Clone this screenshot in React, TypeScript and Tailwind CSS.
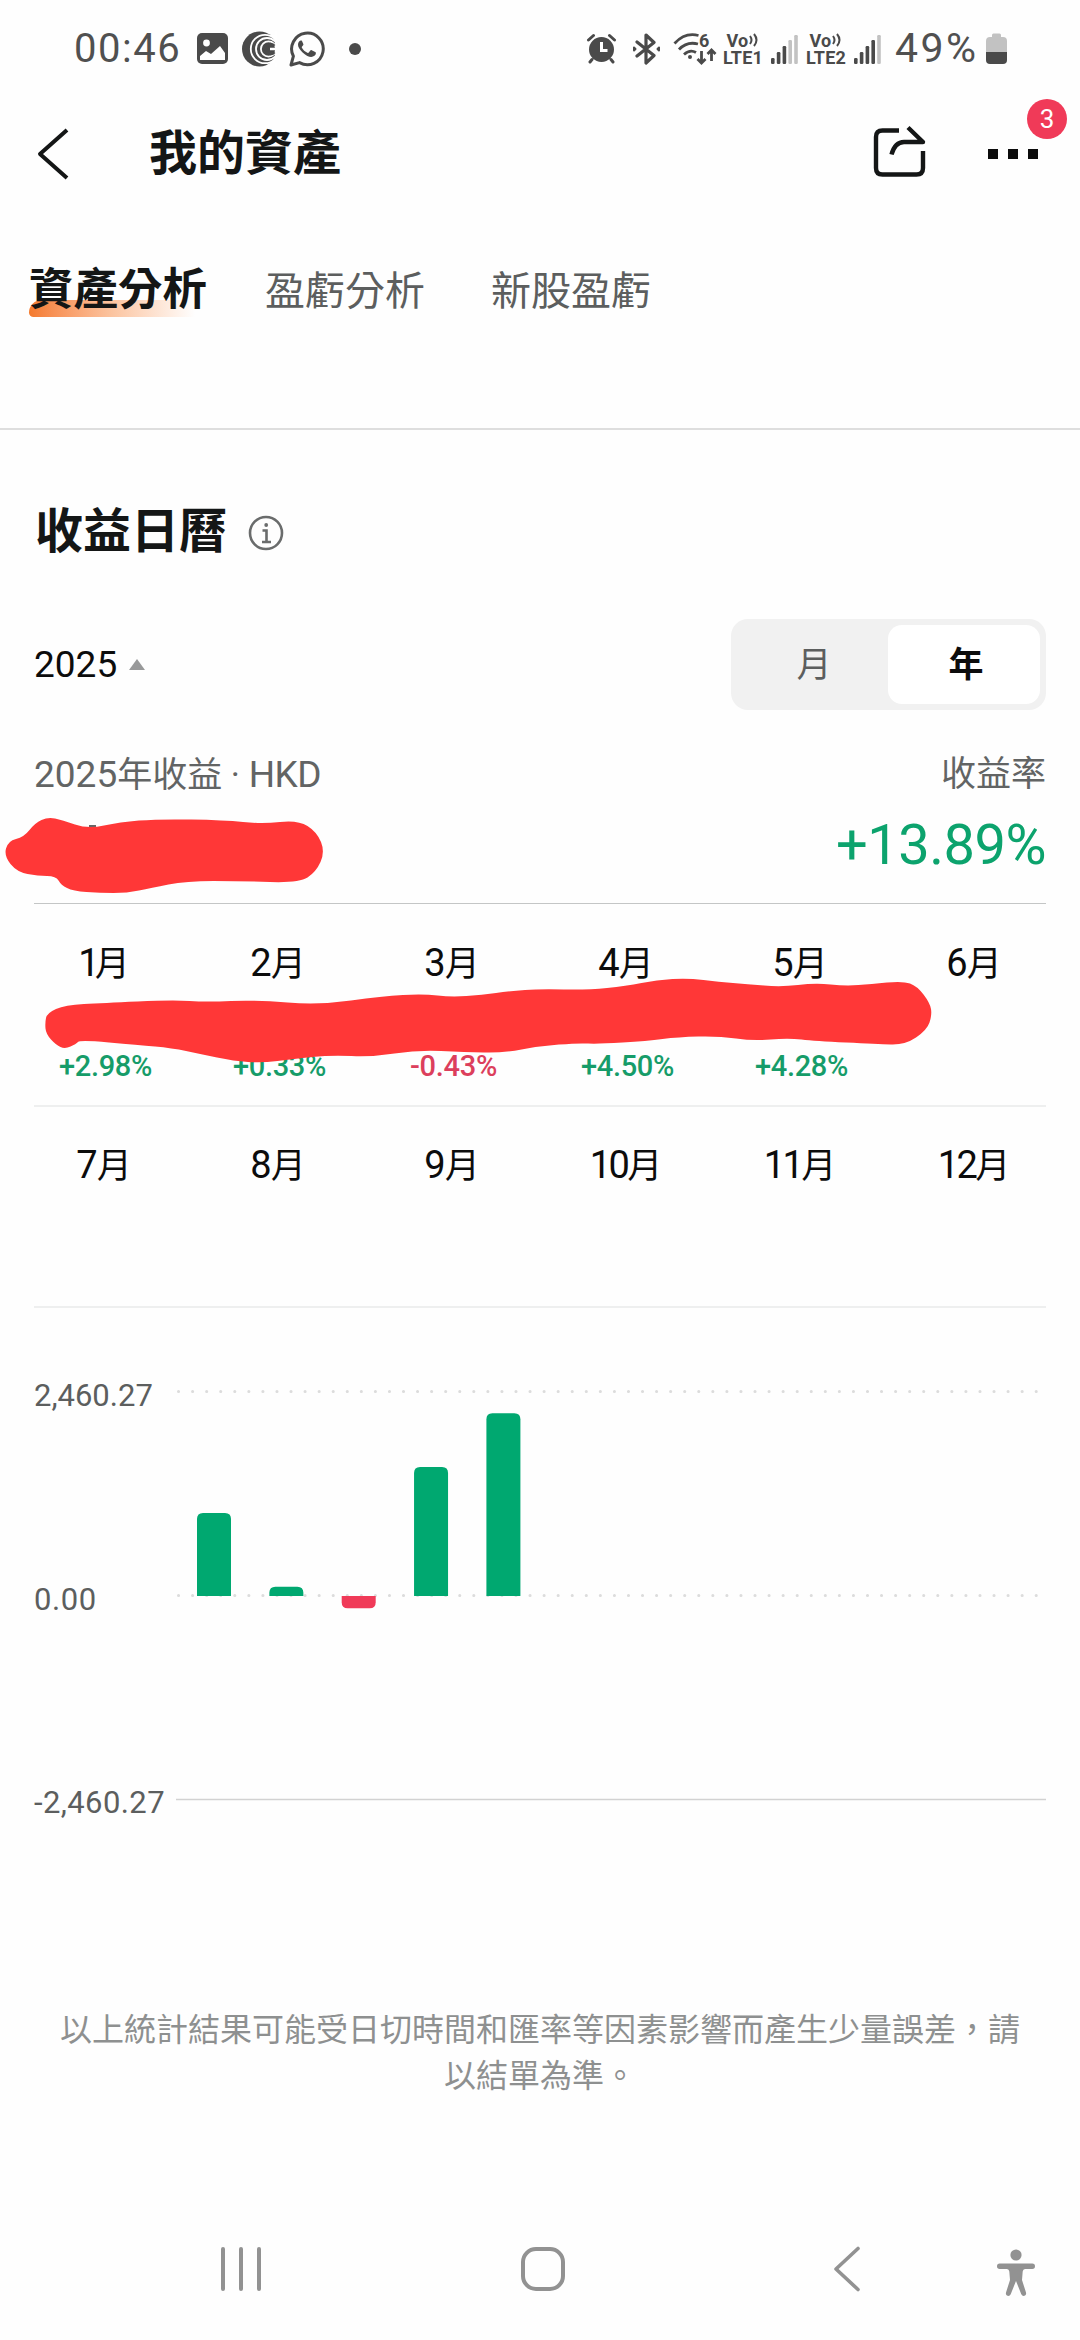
import React, { useState } from 'react';

interface MonthItem {
    month: number;
    rate?: string;
    value?: number;
}

type Point = [number, number];

const MONTHS: MonthItem[] = [
    { month: 1, rate: '+2.98%', value: 1001 },
    { month: 2, rate: '+0.33%', value: 112 },
    { month: 3, rate: '-0.43%', value: -148 },
    { month: 4, rate: '+4.50%', value: 1556 },
    { month: 5, rate: '+4.28%', value: 2203 },
    { month: 6 },
    { month: 7 },
    { month: 8 },
    { month: 9 },
    { month: 10 },
    { month: 11 },
    { month: 12 },
];

const TABS = ['資產分析', '盈虧分析', '新股盈虧'];

const MAX_VALUE = 2460.27;

// Hand-drawn marker outlines that hide the amounts
const TOTAL_MARK: Point[] = [
    [24, 837], [35, 823], [48, 817], [62, 820], [88, 829], [120, 822], [158, 819], [224, 820], [262, 824],
    [298, 820], [317, 832], [325, 852], [316, 872], [299, 883], [241, 881], [186, 881], [151, 888], [127, 893],
    [100, 893], [73, 891], [61, 885], [56, 876], [38, 876], [17, 872], [4, 856], [8, 841],
];

const MONTH_MARK: Point[] = [
    [45, 1023], [47, 1013], [65, 1005], [103, 1003], [172, 1000], [207, 1002], [255, 1000], [320, 1005],
    [382, 996], [424, 994], [451, 997], [482, 995], [510, 991], [540, 989], [588, 990], [626, 986], [657, 980],
    [688, 978], [719, 982], [747, 984], [781, 987], [815, 983], [846, 986], [871, 984], [903, 981], [917, 986],
    [930, 1003], [932, 1015], [927, 1030], [905, 1045], [877, 1044], [815, 1041], [788, 1038], [753, 1041],
    [719, 1036], [678, 1037], [647, 1041], [598, 1044], [578, 1043], [540, 1046], [503, 1053], [465, 1052],
    [417, 1050], [372, 1057], [331, 1055], [293, 1059], [262, 1063], [234, 1061], [200, 1054], [172, 1048],
    [138, 1045], [80, 1040], [76, 1044], [65, 1049], [56, 1045], [46, 1034],
];

const toSmoothPath = (points: Point[]) => {
    const mid = (a: Point, b: Point) => `${(a[0] + b[0]) / 2} ${(a[1] + b[1]) / 2}`;
    const last = points[points.length - 1];
    const curves = points.map((p, i) => `Q${p[0]} ${p[1]} ${mid(p, points[(i + 1) % points.length])}`);
    return `M${mid(last, points[0])}${curves.join('')}Z`;
};

// The digit "1" carries wide side bearings, so it is pulled in towards 月
const monthSpacing = (month: number) => {
    if (month === 1) return 'tracking-[-5px]';
    return month < 10 ? 'tracking-[-1px]' : 'tracking-[-2.5px]';
};

const SignalBars: React.FC<{ level: number }> = ({ level }) => (
    <svg width="28" height="32" viewBox="0 0 28 32">
        {[6, 12, 18, 24, 29].map((h, i) => (
            <rect key={h} x={i * 5.8} y={31 - h} width="3.6" height={h} rx="1.2" fill={i < level ? '#4a4a4a' : '#c2c2c2'} />
        ))}
    </svg>
);

const VoLte: React.FC<{ sim: number }> = ({ sim }) => (
    <div className="flex w-[40px] flex-col items-center text-[18px] font-bold leading-[17px] tracking-[0.2px]">
        <span className="flex items-center">
            Vo
            <svg width="11" height="16" viewBox="0 0 11 16" fill="none" stroke="#4a4a4a" strokeWidth="2">
                <path d="M2 4q3 4 0 8M6 2q5 6 0 12" />
            </svg>
        </span>
        <span>LTE{sim}</span>
    </div>
);

const StatusBar: React.FC = () => (
    <div className="flex h-[97px] items-center pl-[74px] pr-[73px] text-[#4a4a4a]">
        <span className="w-[108px] text-[40px] font-normal tracking-[1.5px] text-[#505050]">00:46</span>
        <svg className="ml-[15px]" width="31" height="31" viewBox="0 0 31 31">
            <rect width="31" height="31" rx="5" fill="#4a4a4a" />
            <circle cx="9.5" cy="10" r="3.4" fill="#fff" />
            <path d="M3 27v-4l6-5 5 3 9-8 5 7v7z" fill="#fff" strokeLinejoin="round" />
        </svg>
        <svg className="ml-[14px]" width="35" height="36" viewBox="0 0 35 36" fill="none">
            <circle cx="17.5" cy="18" r="17.5" fill="#4a4a4a" />
            <g stroke="#fff" strokeWidth="1.8">
                <circle cx="23" cy="18" r="14.2" />
                <circle cx="25" cy="18" r="11" />
                <circle cx="26.5" cy="18" r="7.6" />
            </g>
            <path d="M33 0h2v36h-2zM30 4l5 0v8zM30 32l5 0v-8z" fill="#fff" />
            <path d="M32 15.2a4.5 4.5 0 1 0 0 5.6" stroke="#4a4a4a" strokeWidth="3.6" />
            <path d="M28 18h7" stroke="#fff" strokeWidth="2.5" />
        </svg>
        <svg className="ml-[12px]" width="36" height="36" viewBox="0 0 36 36">
            <path
                d="M2 34l2.4-8.8A15.8 15.8 0 1 1 10.5 31.6z"
                fill="none"
                stroke="#4a4a4a"
                strokeWidth="3"
                strokeLinejoin="round"
            />
            <path
                d="M12 9.500c-1.500 0-3 2-3 4.200 0 2 1.500 4.800 4.600 7.800 3.400 3.300 6.300 4.400 8.600 4.400 2.500 0 4.600-1.600 4.700-3.600.1-.8-.2-1-.7-1.300l-3.500-1.800c-.7-.3-1-.1-1.400.4l-1.500 1.900c-.4.500-.8.500-1.400.2-2.400-1.100-4.300-2.800-5.500-5-.3-.5-.2-.8.200-1.200l1-1.200c.4-.5.4-.8.2-1.400l-1.300-3c-.2-.4-.5-.4-1-.4z"
                fill="#4a4a4a"
            />
        </svg>
        <span className="ml-[24px] size-3 rounded-full bg-[#4a4a4a]" />

        <svg className="ml-auto" width="31" height="31" viewBox="0 0 31 31" fill="none" stroke="#4a4a4a" strokeWidth="3" strokeLinecap="round">
            <circle cx="15.5" cy="16.5" r="12.5" fill="#4a4a4a" stroke="none" />
            <path d="M2.5 7l5-4.5M28.5 7l-5-4.5M6 26.5l-2 2.5M25 26.5l2 2.5" />
            <path d="M15.5 9v8.5h6" stroke="#fff" strokeLinecap="butt" />
        </svg>
        <svg className="ml-[14px]" width="30" height="32" viewBox="0 0 30 32" fill="none" stroke="#4a4a4a" strokeWidth="3.2" strokeLinejoin="round" strokeLinecap="round">
            <path d="M6 9l17 13.5-8 7.5V2l8 7.5L6 23" />
            <path d="M3 14.5v3l1.500-1.500zM26.500 16l1.500-1.500v3z" strokeWidth="2" />
        </svg>
        <svg className="ml-[12px]" width="45" height="43" viewBox="0 -5 45 43" fill="none" stroke="#4a4a4a" strokeWidth="2.8">
            <path d="M1.500 11.500Q12 0 25.500 3.500M6 17.500q8-8.500 19-5.500M11 22.500q6-5.500 12-2" />
            <circle cx="17" cy="25" r="2" fill="#4a4a4a" stroke="none" />
            <path d="M28.500 19v12M24.500 27l4 4 4-4M38.500 29V18M34.500 22l4-4 4 4" />
            <text x="26" y="14.5" fontSize="18" fontWeight="700" fill="#4a4a4a" stroke="none">6</text>
        </svg>
        <div className="ml-[5px]"><VoLte sim={1} /></div>
        <div className="ml-[8px]"><SignalBars level={3} /></div>
        <div className="ml-[7px]"><VoLte sim={2} /></div>
        <div className="ml-[8px]"><SignalBars level={4} /></div>
        <span className="ml-[13px] w-[84px] text-[41px] font-normal tracking-[2.5px] text-[#505050]">49%</span>
        <svg className="ml-[7px]" width="21" height="32" viewBox="0 0 21 32">
            <path d="M6 4V2q0-1.500 1.500-1.500h6Q15 .5 15 2v2h2q4 0 4 4v11H0V8q0-4 4-4z" fill="#c2c2c2" />
            <path d="M0 19h21v8q0 4-4 4H4q-4 0-4-4z" fill="#4a4a4a" />
        </svg>
    </div>
);

const Header: React.FC = () => (
    <header className="flex h-[113px] items-center text-[#141616]">
        <svg className="ml-[36px]" width="34" height="54" viewBox="0 0 34 54" fill="none" stroke="#141616" strokeWidth="4">
            <path d="M31 3L4 27l27 24" strokeLinejoin="round" />
        </svg>
        <h1 className="ml-[79px] pt-px text-[48px] font-bold leading-none">我的資產</h1>
        <svg className="mb-[3px] ml-auto" width="54" height="58" viewBox="0 0 54 58" fill="none" stroke="#141616" strokeWidth="4.4">
            <path d="M27 7.500H10.500q-6.500 0-6.500 6.500v31q0 6.500 6.500 6.500h34q6.500 0 6.500-6.500V28" transform="translate(-1 0)" />
            <path d="M18.500 31.500Q22 19 31 19h19L35 4.500" strokeLinejoin="round" />
        </svg>
        <div className="relative ml-[61px] mr-[42px] flex gap-[10px]">
            <span className="size-[10px] bg-[#0c0c0c]" />
            <span className="size-[10px] bg-[#0c0c0c]" />
            <span className="size-[10px] bg-[#0c0c0c]" />
            <span className="absolute -top-[50px] left-[39px] flex size-10 items-center justify-center rounded-full bg-[#f03a58] text-[26px] leading-none text-white">
                3
            </span>
        </div>
    </header>
);

const ProfitChart: React.FC = () => (
    <div className="mt-[68px] flex h-[480px] pl-[34px]">
        <div className="flex w-[142px] flex-col gap-[163.5px] text-[31px] leading-[40px] text-[#5c5e5e]">
            <span>2,460.27</span>
            <span className="tracking-[0.6px]">0.00</span>
            <span className="tracking-[0.4px]">-2,460.27</span>
        </div>
        <svg width="870" height="450" viewBox="0 0 870 450">
            {[15.5, 219.5].map((y) => (
                <line key={y} x1="2.5" x2="866" y1={y} y2={y} stroke="#dcdcdc" strokeWidth="3" strokeLinecap="round" strokeDasharray="0.1 13.96" />
            ))}
            <line x1="0" x2="870" y1="423.5" y2="423.5" stroke="#d2d2d2" strokeWidth="1.4" />
            {MONTHS.map(({ month, value }, index) => {
                if (!value) return null;
                const x = 21 + index * 72.35;
                const h = (Math.abs(value) / MAX_VALUE) * 204;
                const dir = value > 0 ? -1 : 1;
                return (
                    <path
                        key={month}
                        d={`M${x} 220v${dir * (h - 6)}q0 ${dir * 6} 6 ${dir * 6}h22q6 0 6 ${dir * -6}v${dir * -(h - 6)}z`}
                        fill={value > 0 ? '#00a870' : '#f03a58'}
                    />
                );
            })}
        </svg>
    </div>
);

const NavBar: React.FC = () => (
    <nav className="flex h-[70px] items-center pl-[221px]">
        <svg width="40" height="44" viewBox="0 0 40 44" stroke="#929292" strokeWidth="4" strokeLinecap="round">
            <path d="M2 2v40M20 2v40M38 2v40" />
        </svg>
        <svg className="ml-[260px]" width="44" height="44" viewBox="0 0 44 44" fill="none" stroke="#929292" strokeWidth="4">
            <rect x="2" y="2" width="40" height="40" rx="13" />
        </svg>
        <svg className="ml-[268px]" width="28" height="46" viewBox="0 0 28 46" fill="none" stroke="#929292" strokeWidth="3.6" strokeLinecap="round" strokeLinejoin="round">
            <path d="M25 2.500L3 23l22 20.500" />
        </svg>
        <svg className="ml-[136px] mt-[8px]" width="38" height="48" viewBox="0 0 38 48" fill="#929292">
            <circle cx="19" cy="6" r="5.6" />
            <path d="M2.700 14.500h32.600a2.700 2.700 0 0 1 0 5.400H28q-2 .1-2.300 2.500L25 31l4 12.500q.6 2.600-1.500 3.300t-3.200-1.600L19 32l-5.300 13.200q-1.100 2.300-3.200 1.600T9 43.500L13 31l-.7-8.600Q12 20 10 19.900H2.700a2.700 2.700 0 0 1 0-5.400z" />
        </svg>
    </nav>
);

const App: React.FC = () => {
    const [activeTab, setActiveTab] = useState(TABS[0]);

    return (
        <div
            lang="zh-Hant"
            className="relative h-[2340px] w-[1080px] overflow-hidden bg-[#fefefe] font-['Roboto','Noto_Sans_CJK_TC',sans-serif]"
        >
            <StatusBar />
            <Header />

            <div className="flex h-[220px] items-start gap-[58px] border-b-2 border-[#dedede] pl-[29px] pt-[50px]">
                {TABS.map((tab) =>
                    tab === activeTab ? (
                        <button
                            key={tab}
                            className="relative isolate h-[60px] text-[44.5px] font-bold leading-[60px] text-[#141616]"
                        >
                            <span className="absolute bottom-[3px] left-0 -z-10 h-[17px] w-[166px] rounded-bl-[5px] rounded-tl-[14px] bg-linear-to-r from-[#f47a2c] via-[#fbc4a0] to-[#fefefe]" />
                            {tab}
                        </button>
                    ) : (
                        <button
                            key={tab}
                            onClick={() => setActiveTab(tab)}
                            className="mr-2 h-[60px] text-[40px] leading-[64px] text-[#5c5e5e]"
                        >
                            {tab}
                        </button>
                    )
                )}
            </div>

            <section>
                <div className="flex items-center pl-[35px] pt-[70px]">
                    <h2 className="text-[48px] font-bold leading-[64px] text-[#141616]">收益日曆</h2>
                    <svg className="ml-[21px] mt-[2px]" width="36" height="36" viewBox="0 0 36 36" fill="none" stroke="#6a6c6c" strokeWidth="2.6">
                        <circle cx="18" cy="18" r="16" />
                        <path d="M14.500 15.500H18.500V27M14 27h9" />
                        <circle cx="18.2" cy="10" r="1.9" fill="#6a6c6c" stroke="none" />
                    </svg>
                </div>

                <div className="mt-[55px] flex h-[91px] items-center justify-between px-[34px]">
                    <div className="flex items-center text-[37px] text-[#0c0c0c]">
                        2025
                        <svg className="ml-[12px]" width="16" height="11" viewBox="0 0 16 11">
                            <path d="M8 0l8 11H0z" fill="#98999a" />
                        </svg>
                    </div>
                    <div className="flex h-[91px] w-[315px] rounded-[17px] bg-[#f1f1f1] p-[6px] text-[35px]">
                        <button className="flex-1 pl-[3px] pt-[3px] text-[#5c5e5e]">月</button>
                        <button className="flex-1 rounded-[14px] bg-white pl-[4px] pt-[3px] font-bold text-[#0c0c0c]">年</button>
                    </div>
                </div>

                <div className="mx-[34px] flex h-[194px] justify-between border-b border-[#c4c6c6] pt-[39px]">
                    <div className="text-[35px] leading-[52px] text-[#626464]">
                        <span className="text-[37px]">2025</span>年收益 · <span className="text-[37px] tracking-[-0.5px]">HKD</span>
                    </div>
                    <div className="flex flex-col items-end">
                        <span className="text-[35px] leading-[52px] text-[#626464]">收益率</span>
                        <span className="mt-[11px] text-[56px] leading-[66px] tracking-[-0.5px] text-[#0ca36d]">+13.89%</span>
                    </div>
                </div>

                <div className="mx-[34px]">
                    {[MONTHS.slice(0, 6), MONTHS.slice(6)].map((row, i) => (
                        <div key={i} className={i === 0 ? 'h-[203px] border-b-2 border-[#eeefef] pt-[31px]' : 'h-[201px] border-b-2 border-[#eeefef] pt-[30px]'}>
                            <div className="-mx-[16px] grid grid-cols-6 text-center">
                                {row.map(({ month, rate }) => (
                                    <div key={month}>
                                        <div className="pr-[2px] text-[35px] leading-[56px] text-[#0c0c0c]">
                                            <span className={`text-[38px] ${monthSpacing(month)}`}>{month}</span>月
                                        </div>
                                        {rate && (
                                            <div className={`mt-[55px] pl-px text-[29px] font-medium leading-[36px] tracking-[-0.3px] ${rate.startsWith('-') ? 'text-[#dc3f5c]' : 'text-[#169c69]'}`}>
                                                {rate}
                                            </div>
                                        )}
                                    </div>
                                ))}
                            </div>
                        </div>
                    ))}
                </div>

                <ProfitChart />
            </section>

            <p className="mt-[151px] px-[60px] text-center text-[32px] leading-[46px] text-[#8e9090]">
                以上統計結果可能受日切時間和匯率等因素影響而產生少量誤差，請以結單為準。
            </p>

            <div className="mt-[135px]">
                <NavBar />
            </div>

            <svg className="pointer-events-none absolute inset-0" width="1080" height="2340" viewBox="0 0 1080 2340">
                <path d="M89 825h7v5h-7z" fill="#666" />
                <path d={toSmoothPath(TOTAL_MARK)} fill="#ff3737" />
                <path d={toSmoothPath(MONTH_MARK)} fill="#ff3737" />
            </svg>
        </div>
    );
};

export default App;
